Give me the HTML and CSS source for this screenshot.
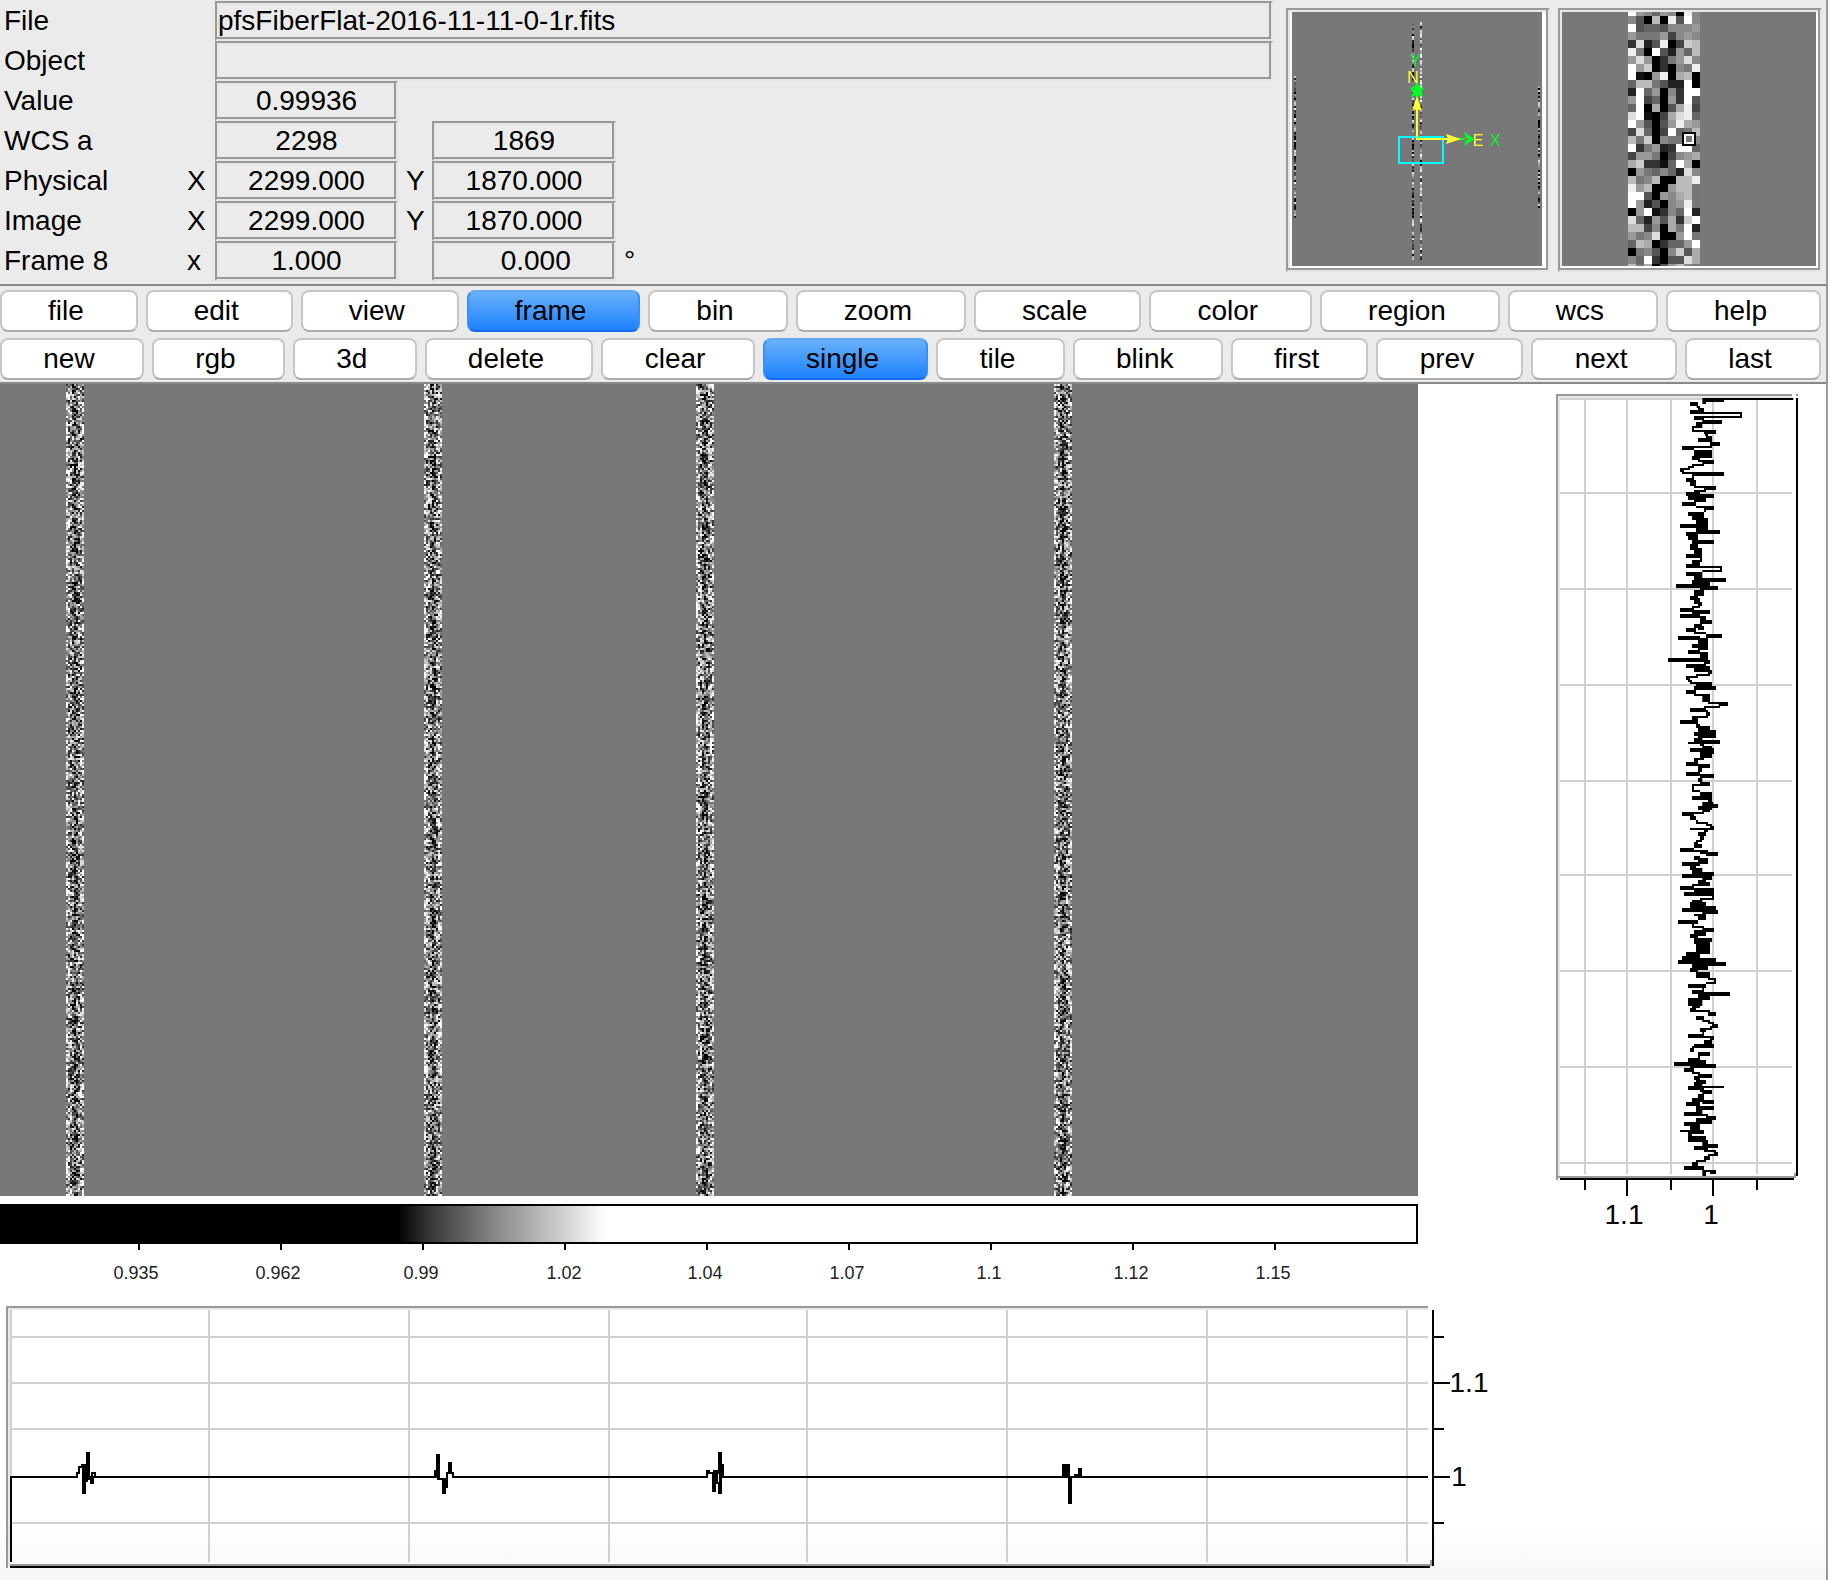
FILE: index.html
```html
<!DOCTYPE html>
<html lang="en">
<head>
<meta charset="utf-8">
<title>pfsFiberFlat-2016-11-11-0-1r.fits</title>
<link rel="stylesheet" href="styles.css">
</head>
<body>
<div class="window">
  <header class="top">
    <div class="info">
      <label class="name" for="file">File</label>
      <input class="field wide" id="file" readonly value="pfsFiberFlat-2016-11-11-0-1r.fits">
      <label class="name" for="object">Object</label>
      <input class="field wide" id="object" readonly value="">
      <label class="name" for="value">Value</label>
      <input class="field first" id="value" readonly value="0.99936">
      <label class="name" for="wcs-x">WCS a</label>
      <input class="field first" id="wcs-x" readonly value="2298">
      <input class="field second" aria-label="WCS y" readonly value="1869">
      <span class="name">Physical</span>
      <label class="axis" for="phys-x">X</label>
      <input class="field first" id="phys-x" readonly value="2299.000">
      <label class="axis mid" for="phys-y">Y</label>
      <input class="field second" id="phys-y" readonly value="1870.000">
      <span class="name">Image</span>
      <label class="axis" for="img-x">X</label>
      <input class="field first" id="img-x" readonly value="2299.000">
      <label class="axis mid" for="img-y">Y</label>
      <input class="field second" id="img-y" readonly value="1870.000">
      <span class="name">Frame 8</span>
      <label class="axis" for="zoom">x</label>
      <input class="field first" id="zoom" readonly value="1.000">
      <input class="field second" id="angle" aria-label="Rotation" readonly value="   0.000">
      <label class="unit" for="angle">°</label>
    </div>
    <div class="viewer">
      <canvas id="panner" width="128" height="128"></canvas>
      <svg class="overlay" viewBox="0 0 256 256">
        <rect x="109" y="125" width="44" height="26" fill="none" stroke="#0ff" stroke-width="2"/>
        <g fill="#0f2" stroke="none">
          <path d="M126 76h2v12h-2zM127 70l3 5 4 1-3 4 2 5-6-2-6 2 2-5-3-4 4-1z"/>
          <path d="M168 126h10v2h-10zM185 127l-5-3-6-4 2 6-2 1 2 1-2 6 6-4z"/>
        </g>
        <g fill="#ff3">
          <path d="M126 92h2v36h-2zM127 84l5 15-5-2-5 2z"/>
          <path d="M126 126h36v2h-36zM171 127l-15 5 2-5-2-5z"/>
        </g>
        <g class="compass">
          <text class="green" x="125" y="54">Y</text>
          <text class="yellow" x="123" y="71">N</text>
          <text class="yellow" x="188" y="134">E</text>
          <text class="green" x="205" y="134">X</text>
        </g>
      </svg>
    </div>
    <div class="viewer">
      <canvas id="magnifier" width="256" height="256"></canvas>
    </div>
  </header>

  <nav class="toolbar">
    <div class="buttons">
      <button>file</button><button>edit</button><button>view</button><button class="on">frame</button><button>bin</button><button>zoom</button><button>scale</button><button>color</button><button>region</button><button>wcs</button><button>help</button>
    </div>
    <div class="buttons">
      <button>new</button><button>rgb</button><button>3d</button><button>delete</button><button>clear</button><button class="on">single</button><button>tile</button><button>blink</button><button>first</button><button>prev</button><button>next</button><button>last</button>
    </div>
  </nav>

  <main class="workspace">
    <div class="image">
      <canvas id="frame" width="709" height="406"></canvas>
      <svg class="colorbar" viewBox="0 0 1418 110">
        <defs>
          <linearGradient id="ramp" gradientUnits="userSpaceOnUse" x1="398" y1="0" x2="606" y2="0">
            <stop offset="0" stop-color="#000"/>
            <stop offset=".14" stop-color="#333"/>
            <stop offset=".45" stop-color="#848484"/>
            <stop offset="1" stop-color="#fff"/>
          </linearGradient>
        </defs>
        <rect x="1" y="9" width="1416" height="38" fill="url(#ramp)" stroke="#000" stroke-width="2"/>
        <path d="M139 48v6M281 48v6M423 48v6M565 48v6M707 48v6M849 48v6M991 48v6M1133 48v6M1275 48v6" stroke="#000" stroke-width="2"/>
        <g class="ticks">
          <text x="136" y="83">0.935</text><text x="278" y="83">0.962</text><text x="421" y="83">0.99</text>
          <text x="564" y="83">1.02</text><text x="705" y="83">1.04</text><text x="847" y="83">1.07</text>
          <text x="989" y="83">1.1</text><text x="1131" y="83">1.12</text><text x="1273" y="83">1.15</text>
        </g>
      </svg>
    </div>
    <svg class="column-plot" viewBox="1418 384 408 922">
      <path d="M1560 399H1792M1560 493H1792M1560 589H1792M1560 685H1792M1560 781H1792M1560 875H1792M1560 971H1792M1560 1067H1792M1560 1163H1792M1585 398V1174M1627 398V1174M1671 398V1174M1713 398V1174M1757 398V1174" class="grid"/>
      <path d="M1559 1178V397H1792" class="light"/>
      <path d="M1557 1180V395H1792M1796 395h2M1558 1177H1795v-4" class="edge"/>
      <path d="M1560 1179H1794M1797 398V1176M1585 1180v10M1627 1180v16M1671 1180v10M1713 1180v16M1757 1180v10" class="line"/>
      <path id="trace" transform="translate(1540 380) scale(.33333)"/>
      <g class="labels"><text x="1624" y="1224">1.1</text><text x="1711" y="1224">1</text></g>
    </svg>
    <svg class="row-plot" viewBox="0 0 1826 274">
      <path d="M10 31H1428M10 77H1428M10 123H1428M10 217H1428M11 4V256M209 4V256M409 4V256M609 4V256M807 4V256M1007 4V256M1207 4V256M1407 4V256" class="grid"/>
      <path d="M9 260V3H1428" class="light"/>
      <path d="M7 262V1H1428M10 259H1431v-5" class="edge"/>
      <path d="M10 261H1430M1433 4V260M1434 31h10M1434 77h16M1434 123h10M1434 171h16M1434 217h10" class="line"/>
      <path class="line" d="M11 256V171H77V167H79V161H82V159H83V187H84V175H87V147H88V171H91V177H92V167H95V171H435V165H437V149H438V173H443V187H444V181H447V167H449V157H451V167H453V171H707V165H709V167H713V185H714V165H717V177H719V187H720V147H721V159H723V171H1428"/>
      <path d="M82 158h4v30h-4zM86 146h4v28h-4zM91 170h3v8h-3zM436 148h4v24h-4zM442 172h4v16h-4zM448 156h4v12h-4zM712 166h4v20h-4zM718 146h4v42h-3v-20h-1z"/>
      <path d="M1062 158h8v40h2v-26h2v-4h4v-6h4v10h-12v26h-2v-28h-6z"/>
      <path d="M1068 170h4v28h-4z"/>
      <g class="labels"><text x="1469" y="86">1.1</text><text x="1459" y="180">1</text></g>
    </svg>
  </main>
</div>
<script src="draw.js"></script>
</body>
</html>
```
FILE: styles.css
```css
* {
  box-sizing: border-box;
}

body {
  margin: 0;
  background: #fff;
  color: #000;
  font-family: "Liberation Sans", Arial, sans-serif;
  font-size: 28px;
}

.window {
  border-right: 2px solid #999;
}

.top {
  display: flex;
  align-items: flex-start;
  gap: 8px;
  padding: 0 4px 3px 0;
  background: #ebebeb;
}

.info {
  flex: 1;
  display: grid;
  grid-template-columns: 184px 31px 183px 34px 184px 1fr;
  grid-auto-rows: 40px;
  line-height: 40px;
  margin-right: 5px;
  padding-top: 1px;
}

.name {
  grid-column: 1;
  padding-left: 4px;
}

.axis {
  grid-column: 2;
  padding-left: 3px;
}

.axis.mid {
  grid-column: 4;
  padding-left: 8px;
}

.unit {
  grid-column: 6;
  padding-left: 8px;
}

.field {
  width: 100%;
  height: 40px;
  padding: 0;
  font: inherit;
  color: inherit;
  text-align: center;
  background: #ebebeb;
  border: 2px solid #e6e6e6;
  border-top-color: #999;
  border-left-color: #999;
  border-radius: 0;
  box-shadow: inset -2px -2px #999, inset 2px 2px #e6e6e6;
  outline: none;
}

.field.first {
  grid-column: 3;
}

.field.second {
  grid-column: 5;
}

.field.wide {
  grid-column: 3 / -1;
  text-align: left;
  padding-left: 1px;
}

.viewer {
  position: relative;
  width: 264px;
  margin-top: 8px;
  padding: 2px;
  border: 2px solid #e6e6e6;
  border-top-color: #999;
  border-left-color: #999;
  box-shadow: inset -2px -2px #999, inset 2px 2px #e6e6e6;
}

.viewer canvas {
  display: block;
  width: 100%;
  background: #fff;
  image-rendering: pixelated;
}

.overlay {
  position: absolute;
  inset: 2px;
}

.compass {
  font-size: 16px;
  text-anchor: middle;
}

.green {
  fill: #0f2;
}

.yellow {
  fill: #ff3;
}

.toolbar {
  display: grid;
  gap: 6px;
  padding: 4px 5px 2px 0;
  background: #ebebeb;
  border-top: 2px solid #888;
  border-bottom: 2px solid #888;
}

.buttons {
  display: flex;
  gap: 8px;
}

button {
  flex: 1 1 auto;
  height: 42px;
  padding: 0 34px 0 28px;
  font: inherit;
  line-height: 38px;
  color: #000;
  background: #fff;
  border: 2px solid #c6c6c6;
  border-bottom-color: #acacac;
  border-radius: 8px;
}

button.on {
  background: linear-gradient(#6cb3fa, #1a80fe) border-box;
  border-color: #62a8f4 #3a8ef6 #1468fa;
}

.workspace {
  display: grid;
  grid-template-columns: 1418fr 408fr;
}

.image canvas,
.workspace svg {
  display: block;
  width: 100%;
}

.image canvas {
  image-rendering: pixelated;
}

.workspace .row-plot {
  grid-column: 1 / -1;
  background: linear-gradient(#fff 80%, #f7f7f7);
}

.grid,
.light,
.edge,
.line {
  fill: none;
  stroke-width: 2px;
}

.grid {
  stroke: #d0d0d0;
}

.light {
  stroke: #e8e8e8;
}

.edge {
  stroke: #999;
}

.line {
  stroke: #000;
}

.labels {
  font-size: 28px;
  text-anchor: middle;
}

.ticks {
  font-size: 18px;
  text-anchor: middle;
  fill: #222;
}
```
FILE: draw.js
```js
// Grey levels of the fiber under the magnifier, one hex digit per pixel.
const fiber = [
  "f986980e8", "850b0e5f8", "f56658889", "977794898", "3d25e04cb", "e70f5296b",
  "9d90379d8", "f9c03087e", "f109e0ab0", "6bb7522f0", "2f69083ff", "9f46093f5",
  "6f0a05ae4", "df104ade6", "f95059ea9", "4d604f67b", "b7c087778", "f37923ff6",
  "49970489a", "ac3316fa0", "0976862d8", "b78b00bbe", "e9b009bb7", "ff5098ab7",
  "f925089e7", "09f1386f2", "d6295a3cf", "bb480a7f2", "978d009f7", "6ba03669f",
  "078508c5a", "86f3055da", "b7a059b87"
];
const grey = h => "#" + h + h + h;
const BG = "#787878";

let seed = 11;
const rnd = () => (seed = (seed * 16807) % 2147483647) / 2147483647;
// Pixel level for one column of a fiber: dark core, bright edges.
function level(col) {
  const mean = [11, 9, 8, 6, 4, 6, 8, 9, 10][col];
  const v = Math.round(mean + (rnd() - 0.5) * 16);
  return Math.max(0, Math.min(15, v)).toString(16);
}

function drawFrame() {
  const c = document.getElementById("frame").getContext("2d");
  c.fillStyle = BG;
  c.fillRect(0, 0, 709, 406);
  for (const x of [33, 212, 348, 527]) {
    for (let y = 0; y < 406; y++) {
      for (let i = 0; i < 9; i++) {
        c.fillStyle = grey(level(i));
        c.fillRect(x + i, y, 1, 1);
      }
    }
  }
}

function drawPanner() {
  const c = document.getElementById("panner").getContext("2d");
  c.fillStyle = BG;
  c.fillRect(1, 0, 125, 127);
  for (const [x, y0, y1, col] of [[61, 5, 124, 3], [65, 5, 124, 7], [2, 32, 103, 3], [124, 37, 98, 3]]) {
    for (let y = y0; y < y1; y++) {
      c.fillStyle = grey(level(col));
      c.fillRect(x, y, 1, 1);
    }
  }
}

function drawMagnifier() {
  const c = document.getElementById("magnifier").getContext("2d");
  c.fillStyle = BG;
  c.fillRect(0, 0, 254, 254);
  fiber.forEach((row, r) => {
    const y = r * 8 - 4;
    for (let i = 0; i < 9; i++) {
      c.fillStyle = grey(row[i]);
      c.fillRect(66 + i * 8, y, 8, Math.min(8, 254 - y));
    }
  });
  c.fillStyle = "#000";
  c.fillRect(120, 120, 14, 14);
  c.fillStyle = "#fff";
  c.fillRect(122, 122, 10, 10);
  c.fillStyle = BG;
  c.fillRect(124, 124, 6, 6);
}

// Runs of the vertical cut: top, bottom, left, right.
const upper = `54,60,487,760 60,66,492,552 60,72,487,498 66,78,450,474 78,84,470,480 84,90,474,492 90,102,450,492 96,102,487,606 96,114,600,606 108,114,487,600
108,120,462,492 120,132,487,546 126,138,468,487 138,156,456,462 138,144,456,487 150,156,456,498 150,162,492,528 162,168,495,504 168,174,498,516 174,186,474,516 186,198,510,540
198,204,426,516 198,210,426,462 210,234,462,516 228,240,456,480 240,246,474,522 240,252,487,522 252,258,456,492 258,264,444,462 264,270,420,450 270,276,420,432 276,282,426,552
276,288,456,552 288,294,456,462 294,306,438,462 300,318,450,468 318,324,462,528 318,330,492,528 330,336,462,498 336,348,438,480 342,354,462,522 348,360,444,498 354,366,462,498
366,378,426,468 378,384,468,522 378,390,492,522 390,396,492,498 396,408,444,492 402,420,456,492 414,456,468,504 432,444,420,504 450,462,468,540 456,468,438,474 468,480,444,474
480,492,456,522 492,510,450,474 504,534,462,486 522,534,438,486 534,546,480,486 540,552,456,480 552,564,438,480 558,564,480,546 558,576,540,546 570,576,487,546 576,588,438,487
582,606,462,487 594,606,487,558 600,618,456,510 612,624,408,510 618,630,480,534 630,648,462,492 648,660,450,474 654,672,462,480 666,678,474,486 678,684,456,480 684,696,420,462
690,702,456,510 702,714,420,480 708,720,480,498 720,732,480,516 732,744,462,486 738,750,474,492 744,756,438,468 756,762,462,498 762,774,498,546 768,780,414,480 774,810,474,504
792,804,456,504 810,822,444,480 816,834,480,504 834,846,384,504 840,852,492,510 852,864,438,498 858,876,462,510 870,882,504,516 882,888,468,510 888,894,438,474 894,900,438,450
900,906,444,456 906,912,450,516 912,924,468,516 918,930,462,528 924,936,462,468 930,942,438,468 942,948,462,510 948,966,487,510 966,972,504,564 966,978,536,564 978,984,492,540
984,996,450,480 984,990,450,498 990,996,474,504 996,1008,498,510 1008,1014,456,504 1014,1026,456,474 1020,1032,420,474 1032,1044,468,480 1038,1050,474,510 1050,1074,474,528
1056,1068,462,528 1074,1086,462,487 1080,1092,480,540 1086,1092,444,490 1092,1098,480,492 1098,1110,487,516 1104,1116,450,522 1110,1122,480,522 1122,1134,480,516 1134,1140,462,492
1140,1152,462,474 1146,1158,438,474 1152,1164,474,510 1164,1176,474,486 1176,1188,438,480 1182,1194,480,522 1194,1206,474,487 1206,1218,480,510 1212,1218,456,486 1218,1230,456,462
1230,1236,456,480 1236,1248,480,516 1248,1260,456,516`;
const lower = `0,6,504,516 6,12,487,520 12,24,487,534 18,30,474,516 30,36,487,510 36,42,426,492 36,48,426,462 48,60,450,468 60,72,468,474 66,72,468,504 72,78,498,516
78,90,510,522 84,90,450,516 90,96,492,504 96,108,474,498 108,120,480,492 120,126,468,486 126,138,462,474 132,144,462,486 144,156,420,462 150,156,456,504 156,168,498,534 156,162,480,504
168,180,462,480 174,192,474,504 186,198,426,480 192,210,450,468 204,222,456,487 216,228,474,522 222,234,426,516 228,240,487,516 240,252,474,498 246,258,480,510 252,258,456,510
258,270,420,462 264,276,462,522 276,288,432,522 288,300,516,522 294,300,480,522 300,312,456,487 306,324,450,498 318,336,450,528 324,336,426,528 330,342,487,534 342,348,462,498
348,360,474,498 360,372,414,474 372,384,456,462 378,384,456,492 384,396,487,522 390,408,462,498 402,414,450,474 414,426,462,516 420,432,462,498 426,462,468,510 456,468,438,480
468,480,426,480 474,492,456,528 480,492,414,528 486,498,456,558 498,510,456,504 504,516,450,468 510,516,468,474 516,534,468,510 534,540,504,528 534,552,522,528 546,552,498,528
552,564,444,498 564,570,487,492 570,582,456,492 576,588,474,570 588,600,474,510 594,618,444,487 612,624,456,480 624,636,450,468 630,636,462,510 636,648,504,528 648,660,468,492
660,666,487,510 666,672,504,522 672,684,516,534 678,684,510,520 684,696,480,498 684,690,480,516 696,708,487,492 702,714,444,492 708,714,487,522 714,720,510,522 720,732,492,516 732,738,462,522
738,744,474,522 744,756,450,462 738,744,456,480 756,768,474,510 768,774,474,480 774,786,444,480 780,792,444,498 786,798,402,498 792,804,450,528 804,816,432,462 816,822,456,480
822,834,474,516 828,840,462,480 840,852,468,498 846,858,462,487 858,864,480,552 858,870,444,487 864,876,480,492 870,882,487,516 882,894,474,492 894,906,456,492 900,912,487,522
906,918,438,480 918,930,468,522 930,942,468,487 936,948,432,480 942,948,468,504 948,960,498,528 954,972,468,516 966,978,432,480 972,990,450,480 990,996,420,492 990,1002,444,492
1002,1014,444,456 1008,1026,444,498 1020,1032,487,504 1032,1044,487,534 1038,1050,462,504 1050,1056,492,528 1056,1068,522,534 1062,1068,504,528 1068,1080,492,510 1080,1086,468,498
1086,1098,456,474 1098,1110,432,492 1110,1116,487,516 1110,1122,510,528 1116,1128,487,498`;

function drawTrace() {
  const box = (text, dy) => text.trim().split(/\s+/).map(s => {
    const [t, b, l, r] = s.split(",").map(Number);
    return `M${l} ${t + dy}V${b + dy}H${r}V${t + dy}Z`;
  }).join("");
  document.getElementById("trace").setAttribute("d", box(upper, 0) + box(lower, 1260));
}

drawFrame();
drawPanner();
drawMagnifier();
drawTrace();
```
